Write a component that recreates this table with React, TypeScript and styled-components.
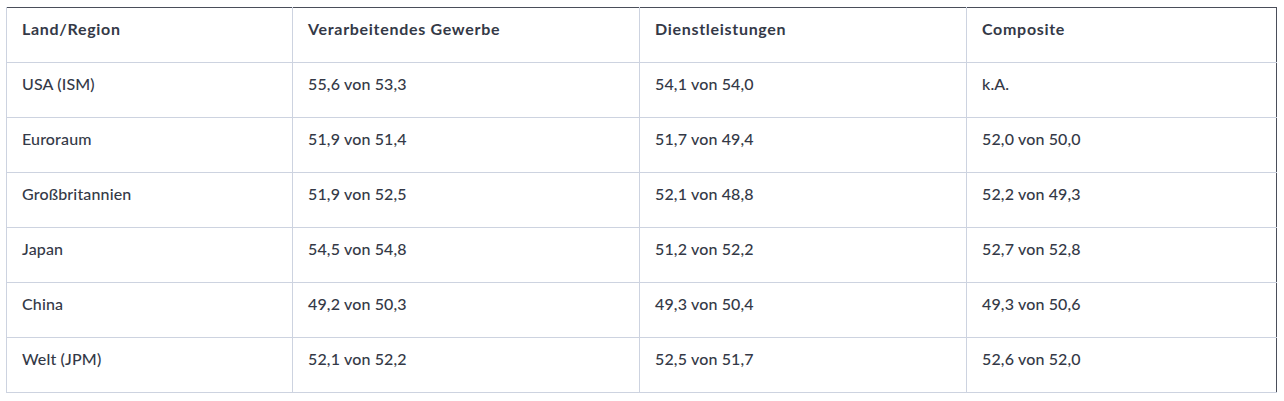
import React from 'react'
import styled, { createGlobalStyle } from 'styled-components'

const GlobalStyle = createGlobalStyle`
    html, body {
        margin: 0;
        padding: 0;
        background: #ffffff;
    }
    body {
        font-family: Lato, 'Open Sans', 'Liberation Sans', sans-serif;
        color: #343947;
    }
`

const Page = styled.div`
    padding: 7px 8px 8px 6px;
`

const Table = styled.table`
    width: 1271px;
    border-collapse: collapse;
    table-layout: fixed;
    border: 1px solid #4a4e5a;
    font-size: 16px;
`

const HeadCell = styled.th<{ $w: number }>`
    width: ${({ $w }) => $w}px;
    height: 55px;
    box-sizing: border-box;
    padding: 11px 15px 0;
    text-align: left;
    vertical-align: top;
    font-weight: 700;
    letter-spacing: 0.7px;
    line-height: 19px;
    border-left: 1px solid #cdd3e0;
    border-bottom: 1px solid #cdd3e0;
`

const Cell = styled.td`
    height: 55px;
    box-sizing: border-box;
    padding: 11px 15px 0;
    vertical-align: top;
    font-weight: 500;
    letter-spacing: 0.15px;
    line-height: 19px;
    border-left: 1px solid #cdd3e0;
    border-bottom: 1px solid #cdd3e0;
`

const columns = [
    { label: 'Land/Region', w: 286 },
    { label: 'Verarbeitendes Gewerbe', w: 347 },
    { label: 'Dienstleistungen', w: 327 },
    { label: 'Composite', w: 310 }
]

const rows = [
    ['USA (ISM)', '55,6 von 53,3', '54,1 von 54,0', 'k.A.'],
    ['Euroraum', '51,9 von 51,4', '51,7 von 49,4', '52,0 von 50,0'],
    ['Großbritannien', '51,9 von 52,5', '52,1 von 48,8', '52,2 von 49,3'],
    ['Japan', '54,5 von 54,8', '51,2 von 52,2', '52,7 von 52,8'],
    ['China', '49,2 von 50,3', '49,3 von 50,4', '49,3 von 50,6'],
    ['Welt (JPM)', '52,1 von 52,2', '52,5 von 51,7', '52,6 von 52,0']
]

export default function App() {
    return (
        <>
            <GlobalStyle />
            <Page>
                <Table>
                    <thead>
                        <tr>
                            {columns.map((c) => (
                                <HeadCell key={c.label} $w={c.w}>
                                    {c.label}
                                </HeadCell>
                            ))}
                        </tr>
                    </thead>
                    <tbody>
                        {rows.map((r) => (
                            <tr key={r[0]}>
                                {r.map((v, i) => (
                                    <Cell key={i}>{v}</Cell>
                                ))}
                            </tr>
                        ))}
                    </tbody>
                </Table>
            </Page>
        </>
    )
}
